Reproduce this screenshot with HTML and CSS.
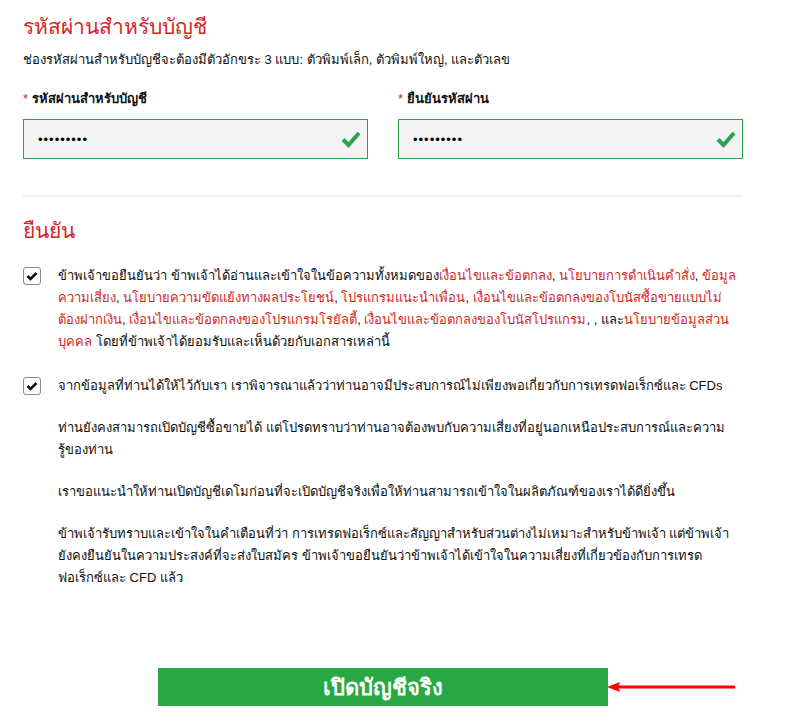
FILE: index.html
```html
<!DOCTYPE html>
<html lang="th">
<head>
  <meta charset="UTF-8">
  <meta name="viewport" content="width=device-width, initial-scale=1.0">
  <title>เปิดบัญชีจริง</title>
  <link rel="stylesheet" href="styles.css">
</head>
<body>
  <div class="container">
    <h2 class="section-title">รหัสผ่านสำหรับบัญชี</h2>
    <p class="hint">ช่องรหัสผ่านสำหรับบัญชีจะต้องมีตัวอักขระ 3 แบบ: ตัวพิมพ์เล็ก, ตัวพิมพ์ใหญ่, และตัวเลข</p>

    <div class="fields">
      <div class="field">
        <label for="password"><span class="req">*</span> รหัสผ่านสำหรับบัญชี</label>
        <div class="input-wrap">
          <input type="password" id="password" value="abcdefghi">
          <svg class="valid" viewBox="0 0 20 18" width="20" height="18"><path d="M2 9.5 L7.5 15 L18 3" fill="none" stroke="#2aa44a" stroke-width="4"/></svg>
        </div>
      </div>
      <div class="field">
        <label for="confirm"><span class="req">*</span> ยืนยันรหัสผ่าน</label>
        <div class="input-wrap">
          <input type="password" id="confirm" value="abcdefghi">
          <svg class="valid" viewBox="0 0 20 18" width="20" height="18"><path d="M2 9.5 L7.5 15 L18 3" fill="none" stroke="#2aa44a" stroke-width="4"/></svg>
        </div>
      </div>
    </div>

    <hr class="divider">

    <h2 class="section-title">ยืนยัน</h2>

    <div class="agree">
      <span class="checkbox"><svg viewBox="0 0 12 10" width="12" height="10"><path d="M1.5 5 L4.5 8 L10.5 2" fill="none" stroke="#111" stroke-width="2.6"/></svg></span>
      <div class="agree-text">
        <p>ข้าพเจ้าขอยืนยันว่า ข้าพเจ้าได้อ่านและเข้าใจในข้อความทั้งหมดของ<a href="#">เงื่อนไขและข้อตกลง</a>, <a href="#">นโยบายการดำเนินคำสั่ง</a>, <a href="#">ข้อมูลความเสี่ยง</a>, <a href="#">นโยบายความขัดแย้งทางผลประโยชน์</a>, <a href="#">โปรแกรมแนะนำเพื่อน</a>, <a href="#">เงื่อนไขและข้อตกลงของโบนัสซื้อขายแบบไม่ต้องฝากเงิน</a>, <a href="#">เงื่อนไขและข้อตกลงของโปรแกรมโรยัลตี้</a>, <a href="#">เงื่อนไขและข้อตกลงของโบนัสโปรแกรม</a>, , และ<a href="#">นโยบายข้อมูลส่วนบุคคล</a> โดยที่ข้าพเจ้าได้ยอมรับและเห็นด้วยกับเอกสารเหล่านี้</p>
      </div>
    </div>

    <div class="agree">
      <span class="checkbox"><svg viewBox="0 0 12 10" width="12" height="10"><path d="M1.5 5 L4.5 8 L10.5 2" fill="none" stroke="#111" stroke-width="2.6"/></svg></span>
      <div class="agree-text">
        <p>จากข้อมูลที่ท่านได้ให้ไว้กับเรา เราพิจารณาแล้วว่าท่านอาจมีประสบการณ์ไม่เพียงพอเกี่ยวกับการเทรดฟอเร็กซ์และ CFDs</p>
        <p class="narrow">ท่านยังคงสามารถเปิดบัญชีซื้อขายได้ แต่โปรดทราบว่าท่านอาจต้องพบกับความเสี่ยงที่อยู่นอกเหนือประสบการณ์และความรู้ของท่าน</p>
        <p>เราขอแนะนำให้ท่านเปิดบัญชีเดโมก่อนที่จะเปิดบัญชีจริงเพื่อให้ท่านสามารถเข้าใจในผลิตภัณฑ์ของเราได้ดียิ่งขึ้น</p>
        <p>ข้าพเจ้ารับทราบและเข้าใจในคำเตือนที่ว่า การเทรดฟอเร็กซ์และสัญญาสำหรับส่วนต่างไม่เหมาะสำหรับข้าพเจ้า แต่ข้าพเจ้ายังคงยืนยันในความประสงค์ที่จะส่งใบสมัคร ข้าพเจ้าขอยืนยันว่าข้าพเจ้าได้เข้าใจในความเสี่ยงที่เกี่ยวข้องกับการเทรดฟอเร็กซ์และ CFD แล้ว</p>
      </div>
    </div>

    <div class="submit-row">
      <button type="submit">เปิดบัญชีจริง</button>
      <svg class="pointer" viewBox="0 0 130 12" width="130" height="12"><path d="M128 6 H12" stroke="#f00" stroke-width="3" stroke-linecap="round"/><path d="M1 6 L14 1 L12 6 L14 11 Z" fill="#f00"/></svg>
    </div>
  </div>
</body>
</html>
```

FILE: styles.css
```css
body {
  margin: 0;
  background-color: #fff;
  font-family: Tahoma, "Liberation Sans", "Noto Sans", sans-serif;
  font-size: 13px;
  color: #111;
}

.container {
  width: 720px;
  padding: 13px 23px 0;
}

.section-title {
  margin: 0;
  font-size: 21px;
  font-weight: normal;
  color: #d71f26;
  line-height: 28px;
}

.hint {
  margin: 10px 0 0;
  line-height: 18px;
}

.fields {
  display: grid;
  grid-template-columns: 345px 345px;
  column-gap: 30px;
  margin-top: 21px;
}

.field label {
  display: block;
  font-weight: bold;
  line-height: 18px;
  margin-bottom: 11px;
}

.req {
  color: #d71f26;
  font-weight: normal;
}

.input-wrap {
  position: relative;
}

.input-wrap input {
  display: block;
  box-sizing: border-box;
  width: 100%;
  height: 40px;
  padding: 0 14px;
  border: 1px solid #2aa44a;
  background-color: #f4f4f4;
  font-size: 13px;
  font-family: inherit;
  letter-spacing: 1px;
}

.valid {
  position: absolute;
  right: 7px;
  top: 11px;
}

.divider {
  border: none;
  border-top: 2px solid #efefef;
  margin: 36px 0 0;
}

.divider + .section-title {
  margin-top: 20px;
}

.agree {
  display: flex;
  gap: 17px;
  margin-top: 20px;
}

.agree + .agree {
  margin-top: 22px;
}

.checkbox {
  flex: none;
  box-sizing: border-box;
  width: 18px;
  height: 18px;
  margin-top: 2px;
  border: 1px solid #8a8a8a;
  border-radius: 3px;
  display: flex;
  align-items: center;
  justify-content: center;
}

.agree-text {
  width: 680px;
}

.agree-text p {
  margin: 0;
  line-height: 22px;
}

.agree-text p + p {
  margin-top: 20px;
}

.agree-text p.narrow {
  max-width: 670px;
}

.agree-text a {
  color: #d71f26;
  text-decoration: none;
}

.submit-row {
  display: flex;
  align-items: center;
  margin: 79px 0 0 135px;
}

button {
  width: 450px;
  height: 38px;
  border: none;
  background-color: #29a744;
  color: #fff;
  font-family: inherit;
  font-size: 22px;
  font-weight: bold;
  cursor: pointer;
}

.pointer {
  margin-left: -2px;
}
```
